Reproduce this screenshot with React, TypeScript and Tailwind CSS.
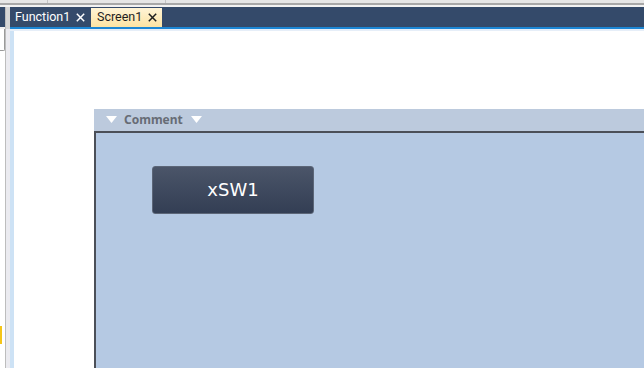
import React from "react";

const Tri = () => (
  <svg width="11" height="8" viewBox="0 0 11 8">
    <polygon points="0,0 11,0 5.5,7" fill="#ffffff" />
  </svg>
);

const Close = ({ color }: { color: string }) => (
  <svg width="9" height="9" viewBox="0 0 9 9">
    <path d="M0.8 0.8 L8.2 8.2 M8.2 0.8 L0.8 8.2" stroke={color} strokeWidth="1.5" />
  </svg>
);

export default function App() {
  return (
    <div
      className="w-[644px] h-[368px] overflow-hidden bg-white flex flex-col"
      style={{ fontFamily: '"Noto Sans", "Open Sans", sans-serif' }}
    >
      {/* top strip */}
      <div className="h-[3px] bg-[#e6e6e6] flex shrink-0">
        <div className="w-[47px]" />
        <div className="w-px bg-[#c4c4c4]" />
        <div className="w-[117px]" />
        <div className="w-px bg-[#c4c4c4]" />
      </div>
      <div className="h-[2px] bg-[#a8a8a8] shrink-0" />
      <div className="h-[2px] bg-[#f2f2f2] shrink-0" />
      <div className="flex flex-1 min-h-0">
        {/* left panel edge */}
        <div className="w-[5px] flex flex-col">
          <div className="h-[20px] bg-[#344a6a]" />
          <div className="h-[2px] bg-[#f0f0f0]" />
          <div className="h-[22px] bg-white border-r border-b border-[#9a9a9a] rounded-br-[2px]" />
          <div className="h-[275px] bg-white" />
          <div className="h-[18px] w-[2px] bg-[#f5c518]" />
        </div>
        <div className="w-px bg-[#bdbdbd]" />
        <div className="w-[4px] flex flex-col">
          <div className="h-[22px] bg-[#d6d6d6]" />
          <div className="flex-1 bg-[#ebebf0]" />
        </div>
        {/* main */}
        <div className="flex-1 flex flex-col min-w-0">
          <div className="h-[20px] bg-[#344a6a] flex items-end shrink-0" style={{ fontFamily: 'Roboto, "Noto Sans", sans-serif' }}>
            <div className="h-[20px] w-[81px] flex items-center pl-[5px] text-[12.5px] text-white leading-none">
              <span>Function1</span>
              <span className="ml-[6px] flex"><Close color="#ffffff" /></span>
            </div>
            <div className="h-[19px] w-[71px] flex items-center pl-[6px] text-[12.5px] text-[#1e1e1e] leading-none bg-gradient-to-b from-[#fff4d6] to-[#fde3a2]">
              <span>Screen1</span>
              <span className="ml-[6px] flex"><Close color="#1e1e1e" /></span>
            </div>
          </div>
          <div className="h-[2px] bg-[#1c86d4] shrink-0" />
          <div className="h-[2px] bg-[#e6eef8] shrink-0" />
          <div className="flex flex-1 min-h-0">
            <div className="w-[4px] bg-[#cde2f5]" />
            <div className="flex-1 bg-white pl-[80px] pt-[78px] min-w-0">
              <div className="flex flex-col h-full">
                <div className="h-[22px] bg-[#bccadd] flex items-center pl-[12px]">
                  <Tri />
                  <span className="ml-[7px] text-[12px] font-bold text-[#676c75] leading-none">Comment</span>
                  <span className="ml-[8px]"><Tri /></span>
                </div>
                <div className="flex-1 bg-[#b5c9e3] border-t-2 border-l-2 border-[#4b4f58] pl-[56px] pt-[33px]">
                  <div className="w-[162px] h-[48px] rounded-[3px] border border-[#5c6678] bg-gradient-to-b from-[#4b5569] to-[#333e54] flex items-center justify-center text-white text-[18px] leading-none"
                    style={{ fontFamily: '"DejaVu Sans", sans-serif' }}>
                    xSW1
                  </div>
                </div>
              </div>
            </div>
          </div>
        </div>
      </div>
    </div>
  );
}
